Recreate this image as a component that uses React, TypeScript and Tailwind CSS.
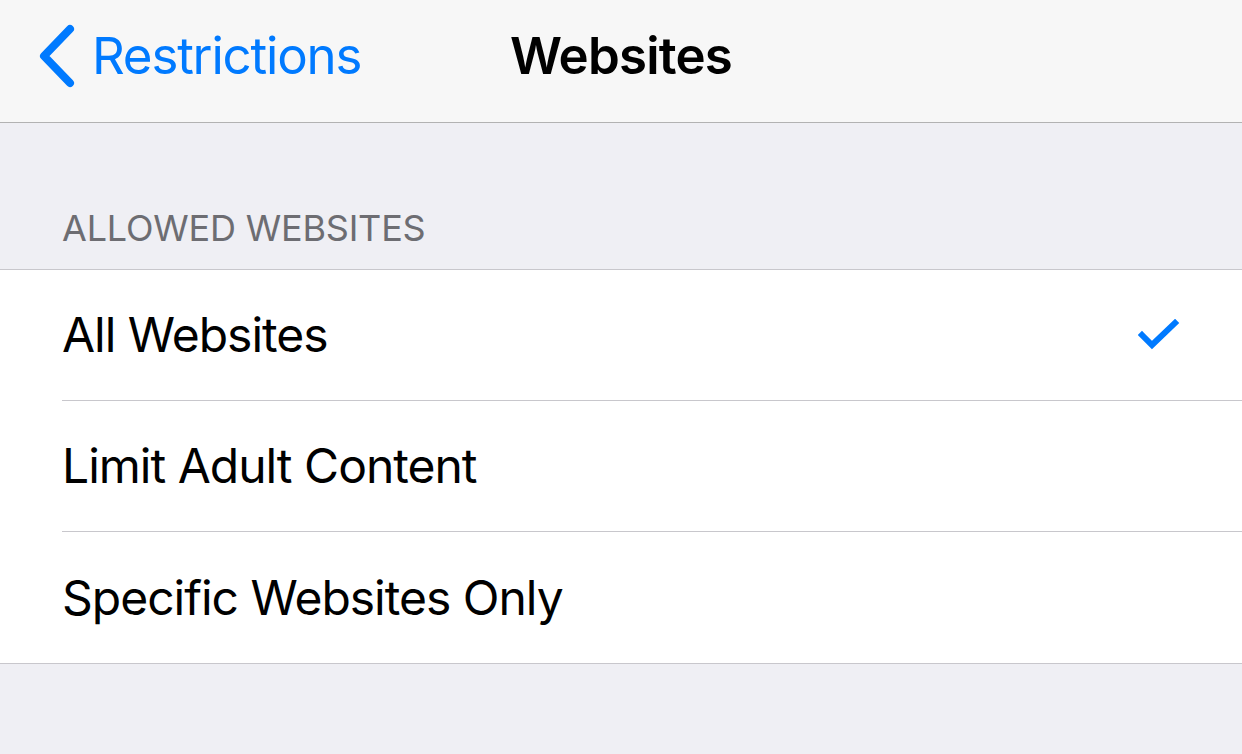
export default function App() {
  const rows = [
    { label: 'All Websites', checked: true },
    { label: 'Limit Adult Content', checked: false },
    { label: 'Specific Websites Only', checked: false },
  ];

  return (
    <div
      className="w-[1242px] h-[754px] bg-[#efeff4] overflow-hidden"
      style={{ fontFamily: 'Inter, "Noto Sans", sans-serif' }}
    >
      {/* Nav bar */}
      <header className="relative h-[123px] bg-[#f7f7f7] border-b border-[#b2b2b2] flex items-center pb-[10px]">
        <div className="flex items-center pl-[38px] text-[#007aff]">
          <svg width="38" height="64" viewBox="0 0 38 64" fill="none">
            <path
              d="M32 5 L6 32 L32 59"
              stroke="#007aff"
              strokeWidth="8"
              strokeLinecap="round"
              strokeLinejoin="round"
            />
          </svg>
          <span className="ml-[16px] text-[51px] tracking-[-1.2px]">Restrictions</span>
        </div>
        <h1 className="absolute left-0 right-0 text-center text-[51px] font-semibold text-black tracking-[-0.8px]">
          Websites
        </h1>
      </header>

      {/* Section header */}
      <div className="h-[146px] flex items-end pl-[62px] pb-[14px]">
        <span className="text-[36px] text-[#6d6d72] tracking-[-0.2px]">ALLOWED WEBSITES</span>
      </div>

      {/* List */}
      <div className="bg-white border-t border-b border-[#c8c7cc]">
        {rows.map((row, i) => (
          <div key={row.label} className="pl-[62px]">
            <div
              className={
                'h-[131px] flex items-center justify-between pr-[62px] ' +
                (i < rows.length - 1 ? 'border-b border-[#c8c7cc]' : '')
              }
            >
              <span className="text-[48px] text-black tracking-[-1px]">{row.label}</span>
              {row.checked && (
                <svg width="42" height="32" viewBox="0 0 42 32" fill="none">
                  <path
                    d="M4 16 L14 26 L37 4"
                    stroke="#007aff"
                    strokeWidth="6"
                    strokeLinecap="square"
                    strokeLinejoin="miter"
                  />
                </svg>
              )}
            </div>
          </div>
        ))}
      </div>
    </div>
  );
}
